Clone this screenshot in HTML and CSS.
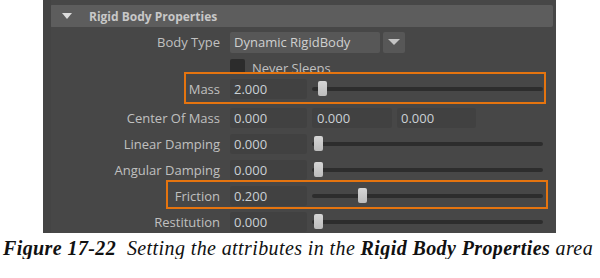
FILE: index.html
```html
<!DOCTYPE html>
<html>

<head>
    <title>Rigid Body Properties</title>
    <link rel="stylesheet" href="styles.css">
</head>

<body>
    <div class="panel">
        <div class="header">
            <span class="caret"></span>
            <span class="title">Rigid Body Properties</span>
        </div>

        <div class="row">
            <div class="label">Body Type</div>
            <div class="combo">
                <div class="comboValue">Dynamic RigidBody</div>
                <div class="comboBtn"><span class="arrow"></span></div>
            </div>
        </div>

        <div class="row check">
            <div class="label"></div>
            <div class="checkItem">
                <span class="box"></span>
                <span>Never Sleeps</span>
            </div>
        </div>

        <div class="row mass">
            <div class="label">Mass</div>
            <div class="field">2.000</div>
            <div class="slider"><span class="thumb" style="left: 6px;"></span></div>
        </div>

        <div class="row">
            <div class="label">Center Of Mass</div>
            <div class="triple">
                <div class="field">0.000</div>
                <div class="field">0.000</div>
                <div class="field">0.000</div>
            </div>
        </div>

        <div class="row">
            <div class="label">Linear Damping</div>
            <div class="field">0.000</div>
            <div class="slider"><span class="thumb" style="left: 2px;"></span></div>
        </div>

        <div class="row">
            <div class="label">Angular Damping</div>
            <div class="field">0.000</div>
            <div class="slider"><span class="thumb" style="left: 2px;"></span></div>
        </div>

        <div class="row">
            <div class="label">Friction</div>
            <div class="field">0.200</div>
            <div class="slider"><span class="thumb" style="left: 46px;"></span></div>
        </div>

        <div class="row">
            <div class="label">Restitution</div>
            <div class="field">0.000</div>
            <div class="slider"><span class="thumb" style="left: 2px;"></span></div>
        </div>

        <div class="highlight hlMass"></div>
        <div class="highlight hlFriction"></div>
    </div>

    <p class="caption"><b>Figure 17-22</b>&nbsp; Setting the attributes in the <b>Rigid Body Properties</b> area</p>
</body>

</html>
```

FILE: styles.css
```css
* {
    box-sizing: border-box;
}

body {
    margin: 0;
    background: #fff;
}

.panel {
    position: relative;
    margin-left: 43px;
    width: 513px;
    height: 233px;
    overflow: hidden;
    background: #474747;
    border-left: 8px solid #444;
    font-family: "Open Sans", sans-serif;
    font-size: 13px;
    color: #c0c0c0;
}

.header {
    display: flex;
    align-items: center;
    height: 22px;
    margin: 5px 3px 2px -1px;
    padding-left: 12px;
    background: #5d5d5d;
    border-radius: 2px;
}

.caret {
    width: 0;
    height: 0;
    border-left: 5px solid transparent;
    border-right: 5px solid transparent;
    border-top: 6px solid #dcdcdc;
}

.title {
    margin-left: 17px;
    font-size: 12px;
    font-weight: bold;
    color: #c8c8c8;
}

.row {
    display: flex;
    align-items: center;
    height: 26px;
}

.label {
    width: 179px;
    flex: none;
    text-align: right;
    padding-right: 10px;
}

.combo {
    display: flex;
    gap: 3px;
    height: 21px;
}

.comboValue {
    width: 150px;
    padding-left: 4px;
    line-height: 21px;
    background: #575757;
    border-radius: 2px;
    color: #d0d0d0;
}

.comboBtn {
    width: 22px;
    display: flex;
    align-items: center;
    justify-content: center;
    background: #575757;
    border-radius: 2px;
}

.arrow {
    width: 0;
    height: 0;
    border-left: 6px solid transparent;
    border-right: 6px solid transparent;
    border-top: 6px solid #c4c4c4;
}

.check {
    height: 17px;
    align-items: flex-start;
    overflow: hidden;
}

.checkItem {
    display: flex;
    gap: 7px;
    padding-top: 4px;
}

.box {
    width: 15px;
    height: 15px;
    background: #2c2c2c;
    border-radius: 2px;
}

.mass {
    height: 33px;
}

.field {
    width: 77px;
    height: 20px;
    flex: none;
    line-height: 20px;
    padding-left: 4px;
    background: #414141;
    border-radius: 2px;
    color: #cbd1d6;
}

.triple {
    display: flex;
    gap: 5px;
}

.triple .field:nth-child(2) {
    width: 80px;
    padding-left: 5px;
}

.triple .field:nth-child(3) {
    width: 79px;
    padding-left: 4px;
}

.slider {
    position: relative;
    width: 231px;
    height: 4px;
    margin-left: 5px;
    background: #2d2d2d;
    border-radius: 2px;
}

.thumb {
    position: absolute;
    top: -6px;
    width: 9px;
    height: 15px;
    background: linear-gradient(#d6d6d6, #bcbcbc);
    border-radius: 2px;
}

.highlight {
    position: absolute;
    border: 2px solid #e5740f;
}

.hlMass {
    left: 133px;
    top: 72px;
    width: 362px;
    height: 32px;
}

.hlFriction {
    left: 115px;
    top: 180px;
    width: 382px;
    height: 29px;
}

.caption {
    margin: 0;
    padding: 4px 0 0 3px;
    font-family: "Liberation Serif", serif;
    font-style: italic;
    font-size: 20px;
    line-height: 22px;
    letter-spacing: 0.4px;
    color: #111;
    white-space: nowrap;
}
```
